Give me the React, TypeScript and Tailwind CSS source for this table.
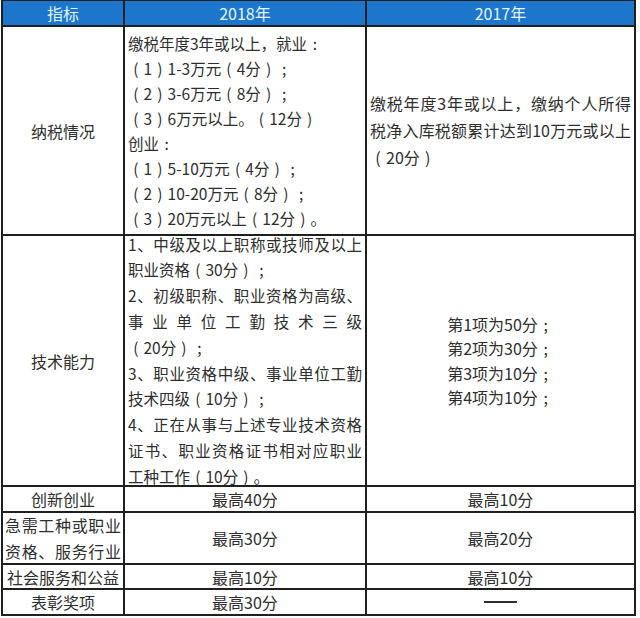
import React from "react";

const PUNCT: Record<string, string> = { "（": "(", "）": ")", "：": ":", "；": ";" };

function T({ s }: { s: string }) {
  const parts: React.ReactNode[] = [];
  let buf = "";
  let k = 0;
  for (const ch of s) {
    if (PUNCT[ch]) {
      if (buf) parts.push(<span key={k++}>{buf}</span>);
      buf = "";
      parts.push(
        <span key={k++} className="inline-block w-[1em] text-center">
          {PUNCT[ch]}
        </span>
      );
    } else {
      buf += ch;
    }
  }
  if (buf) parts.push(<span key={k++}>{buf}</span>);
  return <>{parts}</>;
}

function J({ s }: { s: string }) {
  return (
    <div className="text-justify [text-align-last:justify] whitespace-nowrap">
      {s}
    </div>
  );
}

function L({ s }: { s: string }) {
  return (
    <div className="whitespace-nowrap">
      <T s={s} />
    </div>
  );
}

const cell = "bg-white flex items-center";

export default function App() {
  return (
    <div className="w-[640px] h-[618px] bg-white text-[#2e2e2e] font-['Noto_Sans_CJK_SC','Noto_Sans',sans-serif]">
      <div className="ml-px w-fit grid grid-cols-[120px_240px_267px] grid-rows-[24px_207px_249px_24px_50px_23px_24px] gap-[2px] pt-px px-[2px] pb-[2px] bg-[#1f1f1f] text-[16px]">
        {/* header */}
        <div className="bg-[#1b76cc] text-[#e3f5ff] flex items-center justify-center leading-none">指标</div>
        <div className="bg-[#1b76cc] text-[#e3f5ff] flex items-center justify-center leading-none">2018年</div>
        <div className="bg-[#1b76cc] text-[#e3f5ff] flex items-center justify-center leading-none">2017年</div>

        {/* 纳税情况 */}
        <div className={`${cell} justify-center`}>纳税情况</div>
        <div className={`${cell} pl-[3px] text-[15.5px] leading-[25px]`}>
          <div>
            <L s="缴税年度3年或以上，就业：" />
            <L s="（1）1-3万元（4分）；" />
            <L s="（2）3-6万元（8分）；" />
            <L s="（3）6万元以上。（12分）" />
            <L s="创业：" />
            <L s="（1）5-10万元（4分）；" />
            <L s="（2）10-20万元（8分）；" />
            <L s="（3）20万元以上（12分）。" />
          </div>
        </div>
        <div className={`${cell} px-[3px] leading-[27px]`}>
          <div className="w-full">
            <J s="缴税年度3年或以上，缴纳个人所得" />
            <J s="税净入库税额累计达到10万元或以上" />
            <L s="（20分）" />
          </div>
        </div>

        {/* 技术能力 */}
        <div className={`${cell} justify-center`}>技术能力</div>
        <div className={`${cell} px-[3px] text-[15.5px] leading-[25.8px]`}>
          <div className="w-full">
            <J s="1、中级及以上职称或技师及以上" />
            <L s="职业资格（30分）；" />
            <J s="2、初级职称、职业资格为高级、" />
            <J s="事业单位工勤技术三级" />
            <L s="（20分）；" />
            <J s="3、职业资格中级、事业单位工勤" />
            <L s="技术四级（10分）；" />
            <J s="4、正在从事与上述专业技术资格" />
            <J s="证书、职业资格证书相对应职业" />
            <L s="工种工作（10分）。" />
          </div>
        </div>
        <div className={`${cell} justify-center leading-[24.5px]`}>
          <div>
            <L s="第1项为50分；" />
            <L s="第2项为30分；" />
            <L s="第3项为10分；" />
            <L s="第4项为10分；" />
          </div>
        </div>

        {/* 创新创业 */}
        <div className={`${cell} justify-center leading-none`}>创新创业</div>
        <div className={`${cell} justify-center leading-none`}>最高40分</div>
        <div className={`${cell} justify-center leading-none`}>最高10分</div>

        {/* 急需工种 */}
        <div className={`${cell} px-[2px] leading-[26px]`}>
          <div className="w-full">
            <J s="急需工种或职业" />
            <J s="资格、服务行业" />
          </div>
        </div>
        <div className={`${cell} justify-center leading-none`}>最高30分</div>
        <div className={`${cell} justify-center leading-none`}>最高20分</div>

        {/* 社会服务和公益 */}
        <div className={`${cell} justify-center leading-none`}>社会服务和公益</div>
        <div className={`${cell} justify-center leading-none`}>最高10分</div>
        <div className={`${cell} justify-center leading-none`}>最高10分</div>

        {/* 表彰奖项 */}
        <div className={`${cell} justify-center leading-none`}>表彰奖项</div>
        <div className={`${cell} justify-center leading-none`}>最高30分</div>
        <div className={`${cell} justify-center`}>
          <div className="w-[33px] h-[1.5px] bg-[#2e2e2e]" />
        </div>
      </div>
    </div>
  );
}
